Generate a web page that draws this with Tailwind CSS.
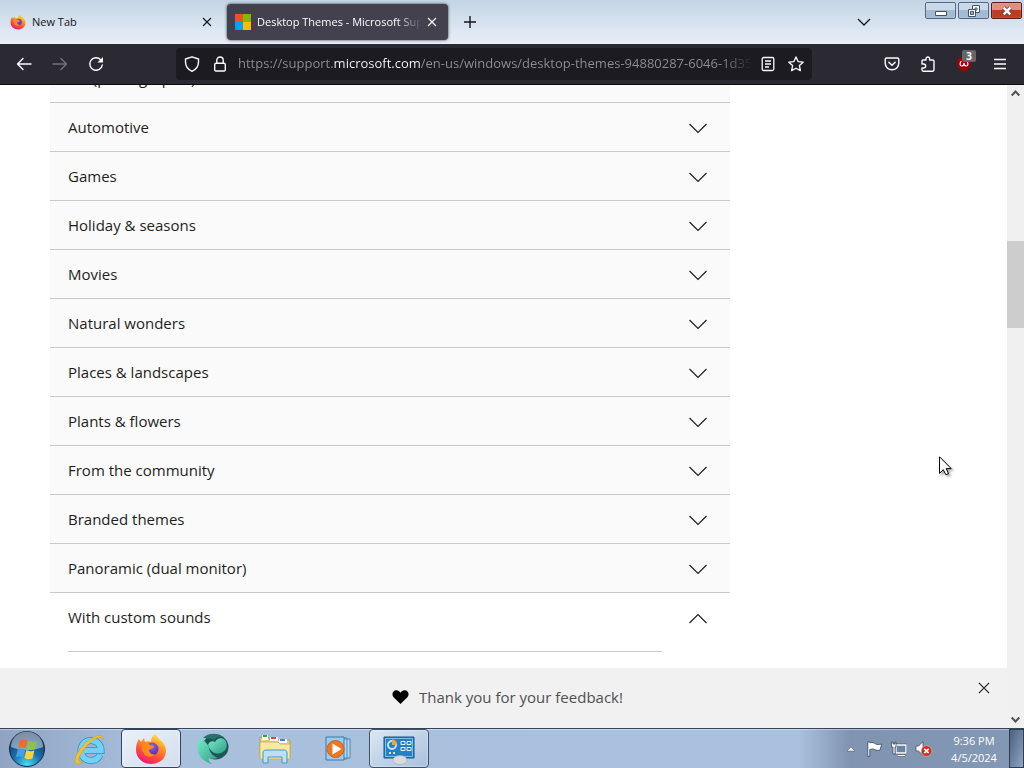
<!DOCTYPE html>
<html lang="en">
<head>
  <meta charset="UTF-8">
  <meta name="viewport" content="width=device-width, initial-scale=1.0">
  <title>Desktop Themes - Microsoft Support</title>
  <script src="https://cdn.jsdelivr.net/npm/@tailwindcss/browser@4"></script>
  <style>
    body {
      font-family: 'Open Sans', 'Noto Sans', sans-serif;
    }
  </style>
</head>
<body class="h-screen flex flex-col overflow-hidden bg-white text-[#1e1e1e]">

  <!-- Shared gradients and shapes -->
  <svg class="absolute w-0 h-0" aria-hidden="true">
    <defs>
      <linearGradient id="fox" x1="0.8" y1="0" x2="0.3" y2="1">
        <stop offset="0" stop-color="#fff04a" />
        <stop offset="0.35" stop-color="#ff9a1f" />
        <stop offset="0.7" stop-color="#ff4a3d" />
        <stop offset="1" stop-color="#e8177b" />
      </linearGradient>
      <radialGradient id="globe" cx="0.5" cy="0.3" r="0.7">
        <stop offset="0" stop-color="#9a5cf5" />
        <stop offset="1" stop-color="#4a2fa8" />
      </radialGradient>
      <symbol id="firefox" viewBox="0 0 32 32">
        <path fill="url(#fox)" d="M20 1c2 2 3 4 5 6 3 2 6 6 6 11 0 8-7 13-15 13S1 25 1 17c0-5 1-8 3-11l2 3 3-4 1 4c2-1 4-1 6 0 0-3 1-6 4-8z" />
        <circle cx="17" cy="16" r="6.500" fill="url(#globe)" />
        <path fill="#ff8a1c" d="M7 10c3-1 6 0 8 2l4 1c0 2-3 3-5 4 0 3 3 5 6 4-2 3-8 4-11 0-2-3-3-7-2-11z" />
      </symbol>
    </defs>
  </svg>

  <!-- Title bar with tabs -->
  <header class="relative flex items-center h-11 shrink-0 bg-linear-to-b from-[#c3d5e5] to-[#e9eef8]">
    <div class="flex items-center w-[227px] h-9 pl-2.5 pr-3.5">
      <svg class="w-4 h-4 shrink-0"><use href="#firefox" /></svg>
      <span class="ml-1.5 grow text-[11px] text-[#15141a]">New Tab</span>
      <button aria-label="Close New Tab">
        <svg class="w-3 h-3" viewBox="0 0 12 12" fill="none" stroke="#15141a" stroke-width="1.1"><path d="M2 2l8 8M10 2l-8 8" /></svg>
      </button>
    </div>
    <div class="flex items-center w-[221px] h-9 pl-2 pr-2.5 rounded-sm bg-[#42414d] shadow-[0_0_3px_#333]">
      <svg class="w-4 h-4 shrink-0" viewBox="0 0 16 16">
        <path fill="#f25022" d="M0 0h8v8H0z" />
        <path fill="#7fba00" d="M8 0h8v8H8z" />
        <path fill="#00a4ef" d="M0 8h8v8H0z" />
        <path fill="#ffb900" d="M8 8h8v8H8z" />
      </svg>
      <span class="ml-1.5 grow overflow-hidden whitespace-nowrap text-[11px] text-[#fbfbfe] [mask-image:linear-gradient(to_right,black_85%,transparent)]">Desktop Themes - Microsoft Support</span>
      <button class="ml-1 shrink-0" aria-label="Close Desktop Themes">
        <svg class="w-3 h-3" viewBox="0 0 12 12" fill="none" stroke="#fbfbfe" stroke-width="1.1"><path d="M2 2l8 8M10 2l-8 8" /></svg>
      </button>
    </div>
    <button class="ml-3.5" aria-label="New tab">
      <svg class="w-4 h-4" viewBox="0 0 16 16" fill="none" stroke="#15141a" stroke-width="1.4"><path d="M8 2v12M2 8h12" /></svg>
    </button>
    <button class="ml-auto mr-[152px]" aria-label="List all tabs">
      <svg class="w-4 h-4" viewBox="0 0 16 16" fill="none" stroke="#15141a" stroke-width="1.3"><path d="M2 5l6 6 6-6" /></svg>
    </button>
    <div class="absolute top-0.5 right-0.5 flex gap-0.5">
      <button class="flex items-center justify-center w-[31px] h-[17px] rounded-xs border border-[#54657f] bg-linear-to-b from-[#c9d9ea] from-50% to-[#a3bad3] to-50% inset-shadow-[0_0_1px_white]" aria-label="Minimize">
        <svg class="w-3 h-3" viewBox="0 0 12 12"><path fill="#fff" stroke="#465066" d="M.5 6.500h11v4H.5z" /></svg>
      </button>
      <button class="flex items-center justify-center w-[31px] h-[17px] rounded-xs border border-[#54657f] bg-linear-to-b from-[#c9d9ea] from-50% to-[#a3bad3] to-50% inset-shadow-[0_0_1px_white]" aria-label="Restore">
        <svg class="w-3 h-3" viewBox="0 0 12 12" fill="#fff" stroke="#465066"><path d="M4.500 .5h7v7h-7z" /><path fill="none" d="M7 3h2v2H7z" /><path d="M.5 4.500h7v7h-7z" /><path fill="#9db4cc" d="M2.500 6.500h3v3h-3z" /></svg>
      </button>
      <button class="flex items-center justify-center w-[31px] h-[17px] rounded-xs border border-[#541d1a] bg-linear-to-b from-[#e08e7d] from-50% to-[#c13a20] to-50% inset-shadow-[0_0_1px_white]" aria-label="Close">
        <svg class="w-2.5 h-2.5" viewBox="0 0 12 12" fill="none"><path stroke="#61413f" stroke-width="5" d="M2 2l8 8M10 2l-8 8" /><path stroke="#fff" stroke-width="3" d="M2 2l8 8M10 2l-8 8" /></svg>
      </button>
    </div>
  </header>

  <!-- Navigation toolbar -->
  <nav class="flex items-center h-[41px] shrink-0 pl-4 pr-4 border-b border-[#0c0c0d] bg-[#2b2a33] text-[#fbfbfe]">
    <div class="flex gap-5">
      <button aria-label="Back">
        <svg class="w-4 h-4" viewBox="0 0 16 16" fill="none" stroke="currentColor" stroke-width="1.4" stroke-linecap="round" stroke-linejoin="round"><path d="M15 8H1.500M7 2.500L1.500 8 7 13.500" /></svg>
      </button>
      <button class="text-[#72717a]" aria-label="Forward">
        <svg class="w-4 h-4" viewBox="0 0 16 16" fill="none" stroke="currentColor" stroke-width="1.4" stroke-linecap="round" stroke-linejoin="round"><path d="M1 8h13.500M9 2.500L14.500 8 9 13.500" /></svg>
      </button>
      <button aria-label="Reload">
        <svg class="w-4 h-4" viewBox="0 0 16 16" fill="none" stroke="currentColor" stroke-width="1.4" stroke-linecap="round"><path d="M14.300 9A6.300 6.300 0 1 1 12.500 3.500" /><path fill="currentColor" stroke="none" d="M15 1v5.600H9.400z" /></svg>
      </button>
    </div>
    <div class="flex items-center grow max-w-[636px] h-8 ml-[72px] px-2 rounded-sm bg-[#1c1b22]">
      <button aria-label="Tracking protection">
        <svg class="w-4 h-4" viewBox="0 0 16 16" fill="none" stroke="currentColor" stroke-width="1.400" stroke-linejoin="round"><path d="M8 .8L14.500 3v3c0 4.500-2.500 7.500-6.500 9.300C4 13.500 1.500 10.500 1.500 6V3z" /></svg>
      </button>
      <button class="ml-3" aria-label="Site information">
        <svg class="w-4 h-4" viewBox="0 0 16 16" fill="none" stroke="currentColor" stroke-width="1.400"><rect x="2.700" y="7.200" width="10.600" height="7.800" rx="1.300" /><path d="M4.800 7V4.200a3.200 3.200 0 0 1 6.400 0V7" /></svg>
      </button>
      <!-- The gradient behind the address keeps the domain brighter than the rest -->
      <input type="text" aria-label="Address" spellcheck="false" value="https://support.microsoft.com/en-us/windows/desktop-themes-94880287-6046-1d35-6d2f-35dee759701e"
        class="grow min-w-0 ml-2.5 mr-2 text-[13px] outline-none text-transparent bg-clip-text bg-[linear-gradient(to_right,#8f8f98_95px,#fbfbfe_95px,#fbfbfe_182px,#8f8f98_182px,#8f8f98_485px,transparent)]">
      <button aria-label="Reader view">
        <svg class="w-4 h-4" viewBox="0 0 16 16" fill="none" stroke="currentColor" stroke-width="1.300"><rect x="2.200" y="1.500" width="11.600" height="13" rx="1.500" /><path d="M5 5h6M5 8h6M5 11h4" /></svg>
      </button>
      <button class="ml-3" aria-label="Bookmark this page">
        <svg class="w-4 h-4" viewBox="0 0 16 16" fill="none" stroke="currentColor" stroke-width="1.300" stroke-linejoin="round"><path d="M8 .9l2.100 4.700 5.100.6-3.800 3.400 1 5L8 12.200l-4.400 2.400 1-5L.8 6.200l5.100-.6z" /></svg>
      </button>
    </div>
    <div class="flex gap-5 ml-auto">
      <button aria-label="Save to Pocket">
        <svg class="w-4 h-4" viewBox="0 0 16 16" fill="none" stroke="currentColor" stroke-width="1.400" stroke-linecap="round" stroke-linejoin="round"><path d="M2.500 2h11c.8 0 1.300.5 1.300 1.300V7c0 4-3 6.800-6.800 6.800S1.200 11 1.200 7V3.300C1.200 2.500 1.700 2 2.500 2z" /><path d="M4.800 6.200L8 9.300l3.200-3.100" /></svg>
      </button>
      <button aria-label="Extensions">
        <svg class="w-4 h-4" viewBox="0 0 16 16" fill="none" stroke="currentColor" stroke-width="1.400" stroke-linejoin="round"><path d="M2 8V5.200c0-.7.400-1.200 1.200-1.200H6V2.800C6 .4 9.600.4 9.600 2.800V4h3c.8 0 1.400.5 1.400 1.300v8.500c0 .8-.6 1.400-1.400 1.400H3.200c-.8 0-1.200-.6-1.200-1.400V12h1.600c2.700 0 2.700-4 0-4z" /></svg>
      </button>
      <button class="relative" aria-label="uBlock Origin, 3 blocked">
        <svg class="w-4 h-4" viewBox="0 0 16 16"><path fill="#a00008" d="M8 0l6.500 2.500V8c0 4-3 6.500-6.500 8-3.500-1.500-6.500-4-6.500-8V2.500z" /><path fill="none" stroke="#fff" stroke-width="1.200" stroke-linecap="round" d="M5 5.500c-1.500 2-1.200 4.500.8 4.500C7.500 10 8 9 8 7c0 2 .5 3 2.200 3 2 0 2.300-2.500.8-4.500" /></svg>
        <span class="absolute -top-1.5 left-1.5 w-3.5 h-3 rounded-xs bg-[#666] text-center text-[10px] leading-3 font-bold text-white">3</span>
      </button>
      <button aria-label="Open application menu">
        <svg class="w-4 h-4" viewBox="0 0 16 16" fill="none" stroke="currentColor" stroke-width="1.300"><path d="M2 3.500h12M2 8h12M2 12.500h12" /></svg>
      </button>
    </div>
  </nav>

  <!-- Page -->
  <div class="relative flex grow min-h-0">
    <div class="flex flex-col grow min-w-0">
      <main class="grow min-h-0 overflow-hidden pl-[50px]">
        <div id="topics" class="-mt-[31px] max-w-[680px]"></div>
        <hr class="ml-[18px] mt-[9px] max-w-[594px] border-[#c8c8c8]">
      </main>
      <section class="relative flex items-center justify-center h-[60px] shrink-0 gap-2.5 pl-2 pb-0.5 bg-[#f1f1f1]">
        <svg class="w-[17px] h-4" viewBox="0 0 17 16"><path fill="#000" d="M8.500 15L1.600 8.200C-.8 5.800.6 1.300 4.300 1.300c1.900 0 3.300 1 4.200 2.500.9-1.500 2.300-2.500 4.200-2.500 3.700 0 5.100 4.500 2.700 6.900z" /></svg>
        <p class="text-[15px] text-[#505050]">Thank you for your feedback!</p>
        <button class="absolute top-3.5 right-[17px]" aria-label="Dismiss">
          <svg class="w-3 h-3" viewBox="0 0 12 12" fill="none" stroke="#333" stroke-width="1.100"><path d="M1 1l10 10M11 1L1 11" /></svg>
        </button>
      </section>
    </div>

    <!-- Scrollbar -->
    <div class="flex flex-col items-center w-[17px] shrink-0 bg-[#f0f0f0]">
      <button class="h-[17px]" aria-label="Scroll up">
        <svg class="w-[9px] h-[17px]" viewBox="0 0 9 17" fill="none" stroke="#505050" stroke-width="2"><path d="M.7 10.500l3.800-4 3.800 4" /></svg>
      </button>
      <div class="w-full h-[87px] mt-[139px] bg-[#cdcdcd]"></div>
      <button class="h-[17px] mt-auto" aria-label="Scroll down">
        <svg class="w-[9px] h-[17px]" viewBox="0 0 9 17" fill="none" stroke="#505050" stroke-width="2"><path d="M.7 6.500l3.800 4 3.800-4" /></svg>
      </button>
    </div>

    <!-- Mouse pointer -->
    <svg class="absolute left-[939px] top-[371px] w-4 h-5 drop-shadow-[2px_2px_1px_#0005]" viewBox="0 0 16 20"><path fill="#fff" stroke="#000" d="M.5.800v16.500l3.800-3.600 2.500 5 2.700-1.100-2.300-5h5z" /></svg>
  </div>

  <!-- Taskbar -->
  <footer class="flex h-10 shrink-0 border-t border-[#33435c] bg-[linear-gradient(to_right,#8fa4c3,#a9c0dd_15%,#a9c1de_78%,#8094b1_83%,#8398b5)] inset-shadow-[0_1px_0_#ffffff66]">
    <button class="flex items-center justify-center w-[54px]" aria-label="Start">
      <svg class="w-[38px] h-[38px]" viewBox="0 0 38 38">
        <defs>
          <radialGradient id="orb" cx="0.5" cy="0.95" r="0.9">
            <stop offset="0" stop-color="#46e0f5" />
            <stop offset="0.450" stop-color="#1a6fae" />
            <stop offset="1" stop-color="#12335e" />
          </radialGradient>
        </defs>
        <circle cx="19" cy="19" r="17.500" fill="url(#orb)" stroke="#16283f" />
        <path fill="#fff" opacity="0.450" d="M3 17a16 15.500 0 0 1 32 0c-9 4-23 4-32 0z" />
        <path fill="#ef6a32" d="M12 10c2-1.200 5-1.200 7.500.3l-1.800 8c-2.500-1.300-5-1.300-7.500-.1z" />
        <path fill="#8cc63e" d="M20.500 11c2.700 1.400 5.300 1.500 8.300.3l-2 8c-2.800 1-5.300.9-8.100-.4z" />
        <path fill="#3fa1e3" d="M9.800 19.300c2.400-1.100 5-1 7.500.2l-1.900 8c-2.500-1.300-5-1.300-7.500-.2z" />
        <path fill="#fbd238" d="M18.300 20.100c2.700 1.300 5.300 1.400 8.100.4l-1.900 8c-2.800 1-5.500.9-8.100-.5z" />
      </svg>
    </button>
    <button class="flex items-center justify-center w-[67px] pl-1" aria-label="Internet Explorer">
      <svg class="w-8 h-8" viewBox="0 0 32 32" fill="none">
        <path stroke="#2a8cc9" stroke-width="7" d="M26 22c-2 4-5.500 5.500-9 5.500-6 0-10-4.500-10-10s4-10 10-10 10 4.500 10 10H10" />
        <path stroke="#72d2f4" stroke-width="5.500" d="M26 22c-2 4-5.500 5.500-9 5.500-6 0-10-4.500-10-10s4-10 10-10 10 4.500 10 10H10" />
        <path fill="#f3c32f" stroke="#d39a19" stroke-width="0.500" d="M29 7c1-4-3-6-9-3C10 9 1 21 1 28c0 4 4 4 8 1-4 1-5-1-4-4C8 17 16 8 23 5c4-1.500 6-1 6 2z" />
      </svg>
    </button>
    <button class="flex items-center justify-center w-[60px] rounded-sm border border-[#34435a] bg-linear-to-br from-[#e9f0f8] to-[#d3dfee] inset-shadow-[0_0_2px_white]" aria-label="Firefox">
      <svg class="w-8 h-8"><use href="#firefox" /></svg>
    </button>
    <button class="flex items-center justify-center w-[64px]" aria-label="Dolphin">
      <svg class="w-8 h-8" viewBox="0 0 32 32">
        <defs>
          <linearGradient id="teal" x1="0" y1="0" x2="1" y2="1">
            <stop offset="0" stop-color="#7eeccb" />
            <stop offset="1" stop-color="#2a9c86" />
          </linearGradient>
        </defs>
        <ellipse cx="18.500" cy="14" rx="13" ry="12.500" fill="#1d5553" />
        <path fill="url(#teal)" d="M11 12c1-3 4-5 7-3 2-4 7-5 10-2 3 4 2 10-2 12-5 3-12 2-15-7z" />
        <path fill="url(#teal)" d="M5 4C6 8 11 10 12 15c1 5 4 8 9 10-4 1-7 1-9 0-1 3 1 4 3 6C7 29 0 23 0 14 0 9 2 6 5 4z" />
        <path fill="#2a716b" d="M6 5c4-5 15-6 20-1-4-1-7 0-9 3-4-2-7-2-11-2z" />
      </svg>
    </button>
    <button class="flex items-center justify-center w-[60px]" aria-label="Windows Explorer">
      <svg class="w-8 h-8" viewBox="0 0 32 32">
        <path fill="#e9cf7c" stroke="#b39849" d="M1 4h8l2 3h20v18H1z" />
        <path fill="#fff" d="M3 2h6v5H3zM11 4h8v4h-8zM20 6h8v4h-8z" />
        <path fill="#39a349" d="M4 2h4v2H4z" />
        <path fill="#d6492f" d="M12 4h5v2h-5z" />
        <path fill="#3c84cc" d="M21 6h5v2h-5z" />
        <path fill="#fbe9a0" stroke="#cdb35f" d="M1 9h18l2 2h10v15H1z" />
        <path fill="#b9e0f5" stroke="#4795c4" d="M4 30V20c0-2 1-3 3-3h18c2 0 3 1 3 3v10h-5v-6H9v6z" />
      </svg>
    </button>
    <button class="flex items-center justify-center w-[64px] pl-1" aria-label="Windows Media Player">
      <svg class="w-8 h-8" viewBox="0 0 32 32">
        <path fill="#b8d8ef" stroke="#4b86b6" d="M12 6h15v19H12zM9 5h15v21H9z" />
        <path fill="#9ccbee" stroke="#3779ae" d="M3 4h18v23H3z" />
        <circle cx="12.500" cy="16" r="8.500" fill="#ee7721" stroke="#c6651e" />
        <path fill="#fff" d="M9.500 10.500l9 5.500-9 5.500z" />
      </svg>
    </button>
    <button class="flex items-center justify-center w-[60px] rounded-sm border border-[#3f5069] bg-linear-to-br from-[#dbe6f3] to-[#a9c0dd] inset-shadow-[0_0_2px_white]" aria-label="Personalization">
      <svg class="w-8 h-8" viewBox="0 0 32 32">
        <path fill="#2380c7" stroke="#17568b" d="M1 4h30v21H1z" />
        <path fill="none" stroke="#8fd0f3" stroke-width="0.800" d="M2.500 5.500h27v18h-27z" />
        <circle cx="9" cy="12" r="4" fill="none" stroke="#c4e5f8" stroke-width="2" />
        <path fill="#f5a63a" d="M9 12V6.500c3 0 5 2 5 5z" />
        <path fill="#2380c7" stroke="#e9f5fc" d="M18 8.500h4v3h-4zM24 8.500h4v3h-4zM18 14.500h4v3h-4zM24 14.500h4v3h-4z" />
        <path fill="#f3df62" d="M6 19h2v2H6zM10 19h2v2h-2z" />
        <ellipse cx="17" cy="27" rx="7" ry="4.500" fill="#d8dcdf" stroke="#9aa1a8" stroke-width="0.500" />
      </svg>
    </button>

    <!-- Tray -->
    <div class="flex items-center ml-auto text-white">
      <button class="mr-3" aria-label="Show hidden icons">
        <svg class="w-2 h-2" viewBox="0 0 8 8"><path fill="#fff" stroke="#3e4e66" stroke-width="0.500" d="M0 6l4-4 4 4z" /></svg>
      </button>
      <button aria-label="Action Center">
        <svg class="w-4 h-4" viewBox="0 0 16 16"><path fill="#fff" stroke="#33435a" stroke-width="0.800" d="M.8.800h2v1c3-1 4 0 5.500 1s3.500.8 6.500.2L13 9c-2 .6-4 .4-5.200-.4S5 7.700 2.800 8.500v6.800h-2z" /></svg>
      </button>
      <button class="ml-2" aria-label="Network">
        <svg class="w-4 h-4" viewBox="0 0 16 16" fill="none"><path stroke="#2d3c52" stroke-width="2.600" d="M5 4h10v8H5zM7 14.500h7" /><path fill="#6d83a2" stroke="#fff" stroke-width="1.300" d="M5 4h10v8H5zM7 14.500h7" /><path fill="#fff" stroke="#2d3c52" stroke-width="0.700" d="M1 1h1v2h2V1h1v5H4v7H2V6H.5V1z" /></svg>
      </button>
      <button class="ml-2" aria-label="Volume, muted">
        <svg class="w-[18px] h-4" viewBox="0 0 18 16"><path fill="#fff" stroke="#33435a" stroke-width="0.700" d="M1 5h2.500L8 .8v13.400L3.500 10H1z" /><circle cx="11.500" cy="10" r="5.300" fill="#d5271f" stroke="#f1b4af" stroke-width="0.600" /><path stroke="#fff" stroke-width="1.700" d="M9.300 7.800l4.400 4.400M13.700 7.800l-4.400 4.400" /></svg>
      </button>
      <div class="ml-3 mr-1.5 w-[58px] text-center text-[11px] leading-[17px]">
        <p>9:36 PM</p>
        <p>4/5/2024</p>
      </div>
      <button class="w-[15px] h-full border border-[#2f3d52] bg-linear-to-br from-[#4d6080] to-[#8fa5c2]" aria-label="Show desktop"></button>
    </div>
  </footer>

  <script>
    const topics = [
      "Art (photographic)",
      "Automotive",
      "Games",
      "Holiday & seasons",
      "Movies",
      "Natural wonders",
      "Places & landscapes",
      "Plants & flowers",
      "From the community",
      "Branded themes",
      "Panoramic (dual monitor)",
      "With custom sounds",
    ];
    const list = document.getElementById("topics");

    // One button per topic, the last one is open
    topics.forEach((topic, i) => {
      const open = i === topics.length - 1;
      const button = document.createElement("button");
      button.className = open
        ? "flex items-center justify-between w-full h-[49px] pl-[18px] pr-[22px] text-[15px]"
        : "flex items-center justify-between w-full h-[49px] pl-[18px] pr-[22px] text-[15px] border-b border-[#c8c8c8] bg-[#fafafa]";
      button.setAttribute("aria-expanded", open);
      button.innerHTML = `
        <span></span>
        <svg class="w-5 h-5" viewBox="0 0 20 20" fill="none" stroke="#1e1e1e" stroke-width="1.200">
          <path d="${open ? 'M1.500 15L10 6.500l8.500 8.500' : 'M1.500 7L10 15.500l8.500-8.500'}" />
        </svg>
      `;
      button.querySelector("span").textContent = topic;
      list.appendChild(button);
    });
  </script>
</body>
</html>
